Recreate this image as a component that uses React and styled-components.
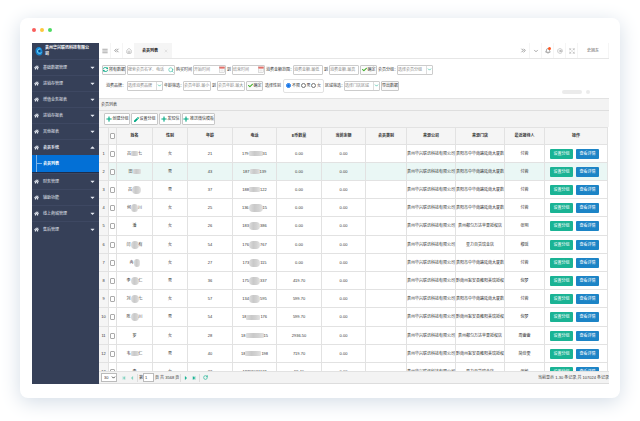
import React, {Component} from "react";
import styled, {createGlobalStyle} from "styled-components";
import {FaHome, FaCaretDown, FaCaretUp, FaPlus, FaPen, FaSyncAlt, FaCheck, FaStepBackward, FaStepForward, FaCaretLeft, FaCaretRight} from "react-icons/fa";
import {Search, Bell, AtSign, Expand, ChevronDown, ChevronsLeft, ChevronsRight, House, X, TextAlignJustify, RotateCw} from "lucide-react";

const GlobalStyle = createGlobalStyle`
  * {
    box-sizing: border-box;
  }

  body {
    margin: 0;
    background: #fff;
    color: #333;
    font: 4px/6px "Liberation Sans", "Noto Sans CJK SC", sans-serif;
  }

  button, input, select {
    margin: 0;
    padding: 0;
    font: inherit;
    color: inherit;
    min-width: 0;
  }

  button {
    cursor: pointer;
  }

  svg {
    flex: none;
  }
`

const Page = styled.div`
  display: flex;
  height: 100vh;
  padding: 18px 20px 23px;
`

const Card = styled.div`
  display: flex;
  flex: 1;
  flex-direction: column;
  min-width: 0;
  padding: 0 11px 14px 12px;
  border-radius: 8px;
  background: #fff;
  box-shadow: 0 4px 20px #d3dce6;
`

const WindowBar = styled.div`
  display: flex;
  align-items: center;
  gap: 4px;
  height: 25px;
  padding-bottom: 1px;
`

const Dot = styled.span`
  width: 4px;
  height: 4px;
  border-radius: 50%;
  background: ${props => props.$color};
`

const Screen = styled.div`
  display: flex;
  flex: 1;
  min-height: 0;
`

const Sidebar = styled.nav`
  flex: none;
  width: 67px;
  background: #364058;
  color: #e4e8f0;
`

const Brand = styled.div`
  display: flex;
  align-items: center;
  gap: 2px;
  height: 16px;
  padding: 0 8px 0 3px;
  font-weight: bold;
  color: #fff;
`

const MenuItem = styled.a`
  display: flex;
  align-items: center;
  gap: 4px;
  height: 16px;
  padding: 0 3px 0 2px;
  border-top: 1px solid #3e4862;
  color: inherit;
  text-decoration: none;
  font-weight: ${props => props.$open ? "bold" : "normal"};

  span {
    flex: 1;
  }
`

const SubItem = styled.a`
  display: flex;
  align-items: center;
  gap: 1px;
  height: 18px;
  padding-left: 4px;
  border-bottom: 1px solid #1f2e4c;
  background: #0370d6;
  color: #fff;
  font-weight: bold;
  text-decoration: none;

  &::before {
    content: "";
    width: 5px;
    height: 1px;
    background: #7fb4e8;
  }

  &::after {
    content: "";
    order: -1;
    width: 1px;
    height: 17px;
    margin-right: -1px;
    background: #7fb4e8;
  }
`

const Main = styled.main`
  display: flex;
  flex: 1;
  flex-direction: column;
  min-width: 0;
`

const TopBar = styled.header`
  display: flex;
  justify-content: space-between;
  height: 16px;
  border-bottom: 1px solid #e6e6e6;
`

const TopGroup = styled.div`
  display: flex;
`

const TopButton = styled.button`
  display: flex;
  align-items: center;
  justify-content: center;
  position: relative;
  width: ${props => props.$wide ? "31px" : "12px"};
  border: 0;
  border-right: 1px solid #f5f5f5;
  background: none;
  color: #555;
`

const Alert = styled.i`
  position: absolute;
  top: 4px;
  right: 2px;
  width: 3px;
  height: 3px;
  border-radius: 50%;
  background: #ff5722;
`

const Tab = styled.a`
  display: flex;
  align-items: center;
  gap: 6px;
  padding: 0 4px 0 7px;
  background: #f5f5f5;
  color: #222;
  font-weight: bold;
  text-decoration: none;
`

const Filters = styled.form`
  display: flex;
  flex-direction: column;
  gap: 1px;
  height: 38px;
  padding: 3px 3px 0;
`

const FilterRow = styled.div`
  display: flex;
  align-items: center;
  gap: 1px;
  height: 15px;
`

const Label = styled.label`
  flex: none;
  width: ${props => props.$width}px;
  text-align: ${props => props.$align || "center"};
  white-space: nowrap;
`

const Field = styled.span`
  display: flex;
  align-items: center;
  flex: none;
  width: ${props => props.$width}px;
  height: 10px;
  border: 1px solid #ccc;
  border-radius: 1px;
  background: #fff;

  input, select {
    flex: 1;
    width: 0;
    height: 8px;
    border: 0;
    outline: 0;
    background: none;
    appearance: none;
    color: #888;
  }

  input::placeholder {
    color: #888;
  }
`

const Arrow = styled.span`
  display: flex;
  align-items: center;
  justify-content: center;
  width: 6px;
  height: 8px;
  border-left: 1px solid #ddd;
  color: #1ab394;
`

const Button = styled.button`
  display: flex;
  flex: none;
  align-items: center;
  justify-content: center;
  gap: 1px;
  width: ${props => props.$width}px;
  height: ${props => props.$tall ? 12 : 10}px;
  border: 1px solid #c8c8c8;
  border-radius: 1px;
  background: ${props => props.$tall ? "#fff" : "#fafafa"};
  white-space: nowrap;

  svg {
    color: ${props => props.$tick ? "#3fae2a" : "#00a884"};
  }
`

const Radios = styled.fieldset`
  display: flex;
  flex: none;
  align-items: center;
  justify-content: space-between;
  width: 41px;
  height: 14px;
  margin: 0;
  padding: 0 2px;
  border: 1px solid #e2e2e2;
  border-radius: 2px;

  label {
    display: flex;
    align-items: center;
    gap: 1px;
  }

  input {
    width: 5px;
    height: 5px;
    accent-color: #0b6fe8;
  }
`

const Pills = styled.div`
  display: flex;
  justify-content: flex-end;
  gap: 4px;
  margin: -4px 16px 0 0;
`

const Pill = styled.span`
  width: ${props => props.$width}px;
  height: 4px;
  border-radius: 2px;
  background: #ebebeb;
`

const Panel = styled.section`
  display: flex;
  flex: 1;
  flex-direction: column;
  min-height: 0;
  margin-top: 1px;
  border-top: 1px solid #e2e2e2;
  background: #f3f3f3;
`

const PanelTitle = styled.h2`
  flex: none;
  height: 12px;
  margin: 0;
  padding-left: 2px;
  border-bottom: 1px solid #dedede;
  font-size: 4px;
  font-weight: normal;
  line-height: 11px;
`

const Tools = styled.div`
  display: flex;
  flex: none;
  align-items: center;
  gap: 1px;
  height: 16px;
  padding-left: 5px;
`

const TableBox = styled.div`
  flex: 1;
  min-height: 0;
  padding-right: 1px;
  overflow: hidden;
  background: #fff;
`

const Table = styled.table`
  width: 100%;
  table-layout: fixed;
  border-collapse: separate;
  border-spacing: 0;

  th, td {
    padding: 0;
    border-right: 1px solid #e2e2e2;
    border-bottom: 1px solid #e2e2e2;
    text-align: center;
    white-space: nowrap;
  }

  th {
    height: 18px;
    border-top: 1px solid #e2e2e2;
    background: #f5f5f5;
  }

  td:first-child {
    background: #f5f5f5;
  }
`

const Row = styled.tr`
  height: 18px;
  background: ${props => props.$active ? "#eaf7f5" : "#fff"};

  &:nth-child(5n) {
    height: 19px;
  }
`

const Check = styled.input`
  display: block;
  width: 5px;
  height: 6px;
  margin: 0 auto;
  border: 1px solid #aaa;
  border-radius: 1px;
  background: #fff;
  appearance: none;
`

const Masked = styled.span`
  display: flex;
  align-items: center;
  justify-content: center;
`

const Smudge = styled.i`
  height: ${props => props.$round ? 8 : 5}px;
  border-radius: ${props => props.$round ? 4 : 1}px;
  background: linear-gradient(90deg, #dedede, #c9c9c9 40%, #d2d2d2 70%, #e2e2e2);
`

const Actions = styled.div`
  display: flex;
  gap: 3px;
  padding-left: 5px;
`

const Action = styled.button`
  width: 23px;
  height: 10px;
  border: 0;
  border-radius: 1px;
  background: ${props => props.$color};
  color: #fff;
`

const Pager = styled.footer`
  display: flex;
  flex: none;
  align-items: center;
  height: 13px;
  padding-left: 2px;
  border-top: 1px solid #e2e2e2;
  border-bottom: 1px solid #ddd;
  white-space: nowrap;
`

const PageSize = styled.span`
  display: flex;
  align-items: center;
  width: 16px;
  height: 9px;
  margin-right: 3px;
  border: 1px solid #bbb;
  background: #fff;

  select {
    flex: 1;
    padding-left: 2px;
    border: 0;
    background: none;
    appearance: none;
  }
`

const PageButton = styled.button`
  display: flex;
  align-items: center;
  justify-content: center;
  width: 8px;
  height: 8px;
  border: 0;
  background: none;
  color: #1ab394;

  &:disabled {
    color: #85d3c2;
  }
`

const Line = styled.span`
  width: 1px;
  height: 8px;
  margin: 0 1px;
  background: #ddd;
`

const PageInput = styled.input`
  width: 11px;
  height: 9px;
  margin-right: 1px;
  padding: 0 1px;
  border: 1px solid #bbb;
  background: #fff;
`

const Total = styled.span`
  margin-left: auto;
`

const menuTop = ["基础数据管理", "进销存管理", "增值业务报表", "进销存报表", "其他报表"]
const menuBottom = ["财务管理", "辅助功能", "线上商城管理", "售后管理"]

const columns = [
  ["", 10], ["check", 8], ["姓名", 36], ["性别", 35], ["年龄", 45], ["电话", 44], ["E币数量", 45],
  ["当前余额", 44], ["会员类别", 41], ["来源公司", 49], ["来源门店", 49], ["最近接待人", 40], ["操作", 63]
]

const company = "贵州华兴联讯科技有限公司"
const guiyang = "贵阳市中华南路延南大厦数"
const xingyi = "黔南州瓮安县雍阳美瑞授权"
const duyun = "贵州都匀万达苹果授权店"
const star = "星力百货瑞金店"

// name and phone: [text before, hidden width, text after, round]
const members = [
  {name: ["吕", 7, "七"], sex: "女", age: 21, phone: ["179", 14, "31"], coins: "0.00", shop: guiyang, staff: "付蓉"},
  {name: ["田", 8, ""], sex: "男", age: 43, phone: ["187", 10, "139"], coins: "0.00", shop: guiyang, staff: "付蓉"},
  {name: ["吕", 9, "", true], sex: "男", age: 37, phone: ["188", 11, "122"], coins: "0.00", shop: guiyang, staff: "付蓉"},
  {name: ["何", 7, "川", true], sex: "女", age: 25, phone: ["136", 14, "15", true], coins: "0.00", shop: guiyang, staff: "付蓉"},
  {name: ["潘", 0, ""], sex: "女", age: 26, phone: ["183", 11, "386", true], coins: "0.00", shop: duyun, staff: "张明"},
  {name: ["闫", 8, "有", true], sex: "女", age: 54, phone: ["176", 11, "767", true], coins: "0.00", shop: star, staff: "穆瑶"},
  {name: ["冉", 6, "", true], sex: "女", age: 27, phone: ["173", 11, "115", true], coins: "0.00", shop: guiyang, staff: "付蓉"},
  {name: ["李", 8, "仁", true], sex: "男", age: 36, phone: ["175", 11, "337", true], coins: "419.70", shop: xingyi, staff: "倪梦"},
  {name: ["刘", 8, "七", true], sex: "女", age: 57, phone: ["134", 11, "595", true], coins: "599.70", shop: guiyang, staff: "付蓉"},
  {name: ["陈", 8, "川", true], sex: "男", age: 54, phone: ["18", 14, "176"], coins: "599.70", shop: xingyi, staff: "倪梦"},
  {name: ["罗", 0, ""], sex: "女", age: 28, phone: ["18", 18, "15"], coins: "2936.50", shop: duyun, staff: "周蕾蕾"},
  {name: ["韦", 8, "仁"], sex: "男", age: 40, phone: ["18", 16, "198"], coins: "719.70", shop: xingyi, staff: "简佳雯"},
  {name: ["李", 0, ""], sex: "女", age: 32, phone: ["18798031137", 0, ""], coins: "99.40", shop: star, staff: "张敏"}
]

const Hidden = ({value}) => {
  const [before, width, after, round] = value
  return (
    <Masked>
      {before}
      {width > 0 && <Smudge $round={round} style={{width}}/>}
      {after}
    </Masked>
  )
}

const Logo = () => (
  <svg width="8" height="10" viewBox="0 0 16 20">
    <path d="M8 2C3 2 1 6 1 10c0 5 3 9 8 9 4 0 6-3 6-7 0-5-3-10-7-10z" fill="#1685d1"/>
    <path d="M11 6C7 5 4 8 5 12c1 3 5 4 8 1" fill="none" stroke="#6ed0f7" strokeWidth="2"/>
    <circle cx="9" cy="10" r="2" fill="#0c3d70"/>
  </svg>
)

const CalendarIcon = () => (
  <svg width="6" height="7" viewBox="0 0 12 14">
    <rect x="1" y="2" width="10" height="11" fill="#fff" stroke="#bbb"/>
    <path d="M1 1h2v2h2V1h2v2h2V1h2v4H1z" fill="#e0473e"/>
    <path d="M3 8h6M3 10h6" stroke="#ccc"/>
  </svg>
)

const TextField = ({width, hint, children}) => (
  <Field $width={width}>
    <input type="text" placeholder={hint} aria-label={hint}/>
    {children}
  </Field>
)

const SelectField = ({id, width, hint}) => (
  <Field $width={width}>
    <select id={id}>
      <option>{hint}</option>
    </select>
    <Arrow><ChevronDown size={5} strokeWidth={3}/></Arrow>
  </Field>
)

const MenuLink = ({text, open}) => (
  <MenuItem href="#" $open={open}>
    <FaHome size={5}/>
    <span>{text}</span>
    {open ? <FaCaretUp size={7}/> : <FaCaretDown size={7}/>}
  </MenuItem>
)

export default class App extends Component {

  state = {sex: "不限", page: "1"}

  render() {
    return (
      <Page>
        <GlobalStyle/>
        <Card>
          <WindowBar>
            <Dot $color="#f95e5c"/>
            <Dot $color="#fdc83d"/>
            <Dot $color="#4ddb62"/>
          </WindowBar>

          <Screen>
            <Sidebar>
              <Brand><Logo/><span>{company}</span></Brand>
              {menuTop.map(text => <MenuLink key={text} text={text}/>)}
              <MenuLink text="会员系统" open/>
              <SubItem href="#">会员列表</SubItem>
              {menuBottom.map(text => <MenuLink key={text} text={text}/>)}
            </Sidebar>

            <Main>
              <TopBar>
                <TopGroup>
                  <TopButton aria-label="菜单"><TextAlignJustify size={6}/></TopButton>
                  <TopButton aria-label="向左"><ChevronsLeft size={7}/></TopButton>
                  <TopButton aria-label="首页"><House size={6} color="#999"/></TopButton>
                  <Tab href="#">会员列表<X size={4} color="#bbb"/></Tab>
                </TopGroup>
                <TopGroup>
                  <TopButton aria-label="向右"><ChevronsRight size={7}/></TopButton>
                  <TopButton aria-label="更多"><ChevronDown size={6}/></TopButton>
                  <TopButton aria-label="消息"><Bell size={6}/><Alert/></TopButton>
                  <TopButton aria-label="便签"><AtSign size={6} strokeWidth={1}/></TopButton>
                  <TopButton aria-label="全屏"><Expand size={6} strokeWidth={1}/></TopButton>
                  <TopButton $wide>史旭东</TopButton>
                </TopGroup>
              </TopBar>

              <Filters>
                <FilterRow>
                  <Button type="button" $width={24}><FaSyncAlt size={5}/>所有数据</Button>
                  <TextField width={48} hint="搜索会员名字、电话"><Search size={6} color="#1ab394"/></TextField>
                  <Label as="span" $width={16}>购买时间</Label>
                  <TextField width={33} hint="开始时间"><CalendarIcon/></TextField>
                  <Label as="span" $width={4}>到</Label>
                  <TextField width={33} hint="结束时间"><CalendarIcon/></TextField>
                  <Label as="span" $width={26}>消费金额范围：</Label>
                  <TextField width={30} hint="消费金额-最低"/>
                  <Label as="span" $width={4}>到</Label>
                  <TextField width={30} hint="消费金额-最高"/>
                  <Button type="button" $tick $width={17}><FaCheck size={5}/>确定</Button>
                  <Label htmlFor="group" $width={18}>会员分组：</Label>
                  <SelectField id="group" width={36} hint="选择会员分组"/>
                </FilterRow>
                <FilterRow>
                  <Label htmlFor="brand" $width={24} $align="right">消费品牌：</Label>
                  <SelectField id="brand" width={36} hint="选择消费品牌"/>
                  <Label as="span" $width={18}>年龄筛选：</Label>
                  <TextField width={28} hint="会员年龄-最小"/>
                  <Label as="span" $width={4}>到</Label>
                  <TextField width={28} hint="会员年龄-最大"/>
                  <Button type="button" $tick $width={17}><FaCheck size={5}/>确定</Button>
                  <Label as="span" $width={18}>选择性别</Label>
                  <Radios aria-label="选择性别">
                    {["不限", "男", "女"].map(sex => (
                      <label key={sex}>
                        <input
                          type="radio"
                          name="sex"
                          checked={this.state.sex === sex}
                          onChange={() => this.setState({sex})}
                        />
                        {sex}
                      </label>
                    ))}
                  </Radios>
                  <Label htmlFor="area" $width={18}>区域筛选：</Label>
                  <SelectField id="area" width={36} hint="选择门店区域"/>
                  <Button type="button" $width={18}>导出数据</Button>
                </FilterRow>
                <Pills><Pill $width={20}/><Pill $width={4}/></Pills>
              </Filters>

              <Panel>
                <PanelTitle>会员列表</PanelTitle>
                <Tools>
                  <Button $tall $width={26}><FaPlus size={6}/>创建分组</Button>
                  <Button $tall $width={27}><FaPen size={5}/>设置分组</Button>
                  <Button $tall $width={22}><FaPlus size={6}/>发短信</Button>
                  <Button $tall $width={33}><FaPlus size={6}/>推送微信模板</Button>
                </Tools>

                <TableBox>
                  <Table>
                    <colgroup>
                      {columns.map(([title, width]) => <col key={title} style={{width}}/>)}
                    </colgroup>
                    <thead>
                      <tr>
                        {columns.map(([title]) => (
                          <th key={title}>
                            {title === "check" ? <Check type="checkbox" aria-label="全选"/> : title}
                          </th>
                        ))}
                      </tr>
                    </thead>
                    <tbody>
                      {members.map((member, index) => (
                        <Row key={index} $active={index === 1}>
                          <td>{index + 1}</td>
                          <td><Check type="checkbox" aria-label={"选择 " + (index + 1)}/></td>
                          <td><Hidden value={member.name}/></td>
                          <td>{member.sex}</td>
                          <td>{member.age}</td>
                          <td><Hidden value={member.phone}/></td>
                          <td>{member.coins}</td>
                          <td>0.00</td>
                          <td></td>
                          <td>{company}</td>
                          <td>{member.shop}</td>
                          <td>{member.staff}</td>
                          <td>
                            <Actions>
                              <Action $color="#1ab394">设置分组</Action>
                              <Action $color="#1c84c6">查看详情</Action>
                            </Actions>
                          </td>
                        </Row>
                      ))}
                    </tbody>
                  </Table>
                </TableBox>

                <Pager>
                  <PageSize>
                    <select aria-label="每页条数"><option>30</option></select>
                    <ChevronDown size={5} strokeWidth={4}/>
                  </PageSize>
                  <PageButton disabled aria-label="第一页"><FaStepBackward size={4}/></PageButton>
                  <PageButton disabled aria-label="上一页"><FaCaretLeft size={6}/></PageButton>
                  <Line/>
                  <label htmlFor="page">第</label>
                  <PageInput id="page" value={this.state.page} onChange={e => this.setState({page: e.target.value})}/>
                  <span>页 共 3568 页</span>
                  <Line/>
                  <PageButton aria-label="下一页"><FaCaretRight size={6}/></PageButton>
                  <PageButton aria-label="最后一页"><FaStepForward size={4}/></PageButton>
                  <Line/>
                  <PageButton aria-label="刷新"><RotateCw size={5} strokeWidth={3}/></PageButton>
                  <Total>当前显示 1-30 条记录,共 107024 条记录</Total>
                </Pager>
              </Panel>
            </Main>
          </Screen>
        </Card>
      </Page>
    )
  }
}
